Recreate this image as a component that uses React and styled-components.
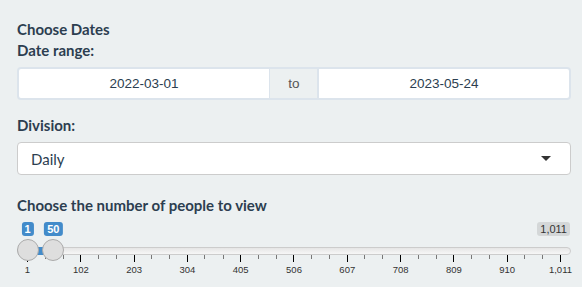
import styled, { createGlobalStyle } from "styled-components";

const GlobalStyle = createGlobalStyle`
  body {
    margin: 0;
    background: #ecf0f1;
    font-family: Lato, "Noto Sans", sans-serif;
    color: #2c3e50;
  }
`;

const Panel = styled.div`
  padding: 19px 11px 0 17px;
  box-sizing: border-box;
  width: 582px;
`;

const Title = styled.div`
  font-size: 15px;
  line-height: 21px;
  font-weight: 700;
`;

const Label = styled.div`
  font-size: 15px;
  line-height: 21px;
  font-weight: 700;
  margin-top: ${(p) => p.$top || 0}px;
  margin-bottom: 6px;
`;

const DateGroup = styled.div`
  display: flex;
  height: 33px;
`;

const DateInput = styled.div`
  flex: 1;
  background: #fff;
  border: 2px solid #dce4ec;
  border-radius: ${(p) => (p.$side === "left" ? "4px 0 0 4px" : "0 4px 4px 0")};
  display: flex;
  align-items: center;
  justify-content: center;
  font-family: "Liberation Sans", Arial, sans-serif;
  font-size: 13.5px;
  color: #2c3e50;
`;

const Addon = styled.div`
  width: 48px;
  border-top: 2px solid #dce4ec;
  border-bottom: 2px solid #dce4ec;
  background: #ecf0f1;
  display: flex;
  align-items: center;
  justify-content: center;
  font-family: "Liberation Sans", Arial, sans-serif;
  font-size: 13.5px;
  color: #555;
  margin: 0 -1px;
`;

const Select = styled.div`
  height: 33px;
  box-sizing: border-box;
  background: #fff;
  border: 1px solid #cccccc;
  border-radius: 4px;
  display: flex;
  align-items: center;
  justify-content: space-between;
  padding: 0 19px 0 13px;
  font-size: 15px;
  color: #2c3e50;
`;

const Caret = styled.span`
  width: 0;
  height: 0;
  border-left: 5px solid transparent;
  border-right: 5px solid transparent;
  border-top: 5px solid #333;
`;

const Slider = styled.div`
  position: relative;
  height: 60px;
  font-family: "Liberation Sans", Arial, sans-serif;
`;

const Line = styled.div`
  position: absolute;
  left: 0;
  right: 0;
  top: 25px;
  height: 8px;
  box-sizing: border-box;
  border: 1px solid #cccccc;
  border-radius: 8px;
  background: linear-gradient(to bottom, #dddddd -50%, #ffffff 150%);
`;

const Bar = styled.div`
  position: absolute;
  top: 25px;
  height: 8px;
  background: #428bca;
`;

const Handle = styled.div`
  position: absolute;
  top: 17px;
  width: 22px;
  height: 22px;
  box-sizing: border-box;
  border: 1px solid #ababab;
  border-radius: 50%;
  background: #dedede;
  transform: translateX(-50%);
`;

const Tag = styled.div`
  position: absolute;
  top: 0;
  height: 14px;
  line-height: 14px;
  padding: 0 3px;
  border-radius: 3px;
  font-size: 11px;
  font-weight: ${(p) => (p.$max ? 400 : 700)};
  color: ${(p) => (p.$max ? "#333" : "#fff")};
  background: ${(p) => (p.$max ? "rgba(0,0,0,0.1)" : "#428bca")};
  ${(p) => (p.$max ? "right: 1px;" : "transform: translateX(-50%);")}
`;

/* grid under the track: minor ticks and major ticks with their values */
const Grid = styled.div`
  position: absolute;
  left: 0;
  right: 0;
  top: 33px;
  height: 27px;
`;

const MinorRow = styled.div`
  display: flex;
  padding: 0 10.5px;
`;

const Interval = styled.div`
  flex: 1;
  display: flex;
  justify-content: space-evenly;
`;

const MinorTick = styled.span`
  width: 1px;
  height: 4px;
  background: #777;
`;

const MajorRow = styled.div`
  display: flex;
  margin: -4px -16.15px 0;
`;

const MajorCell = styled.div`
  flex: 1;
  display: flex;
  flex-direction: column;
  align-items: center;
`;

const MajorTick = styled.span`
  width: 1px;
  height: 7px;
  background: #000;
`;

const TickText = styled.span`
  margin-top: 2px;
  font-size: 9.5px;
  line-height: 12px;
  color: #333;
  white-space: nowrap;
`;

const WIDTH = 554;
const PAD = 10.5;
const MIN = 1;
const MAX = 1011;
const pos = (v) => PAD + ((v - MIN) / (MAX - MIN)) * (WIDTH - 2 * PAD);

function RangeSlider({ from, to }) {
  const majors = Array.from({ length: 11 }, (_, i) => MIN + i * 101);
  return (
    <Slider>
      <Line />
      <Grid>
        <MinorRow>
          {majors.slice(1).map((v) => (
            <Interval key={v}>
              <MinorTick />
              <MinorTick />
            </Interval>
          ))}
        </MinorRow>
        <MajorRow>
          {majors.map((v) => (
            <MajorCell key={v}>
              <MajorTick />
              <TickText>{v.toLocaleString("en-US")}</TickText>
            </MajorCell>
          ))}
        </MajorRow>
      </Grid>
      <Bar style={{ left: pos(from), width: pos(to) - pos(from) }} />
      <Handle style={{ left: pos(from) }} />
      <Handle style={{ left: pos(to) }} />
      <Tag style={{ left: pos(from) }}>{from}</Tag>
      <Tag style={{ left: pos(to) }}>{to}</Tag>
      <Tag $max>{MAX.toLocaleString("en-US")}</Tag>
    </Slider>
  );
}

export default function App() {
  return (
    <>
      <GlobalStyle />
      <Panel>
        <Title>Choose Dates</Title>
        <Label>Date range:</Label>
        <DateGroup>
          <DateInput $side="left">2022-03-01</DateInput>
          <Addon>to</Addon>
          <DateInput $side="right">2023-05-24</DateInput>
        </DateGroup>
        <Label $top={15}>Division:</Label>
        <Select>
          <span>Daily</span>
          <Caret />
        </Select>
        <Label $top={20}>Choose the number of people to view</Label>
        <RangeSlider from={1} to={50} />
      </Panel>
    </>
  );
}
